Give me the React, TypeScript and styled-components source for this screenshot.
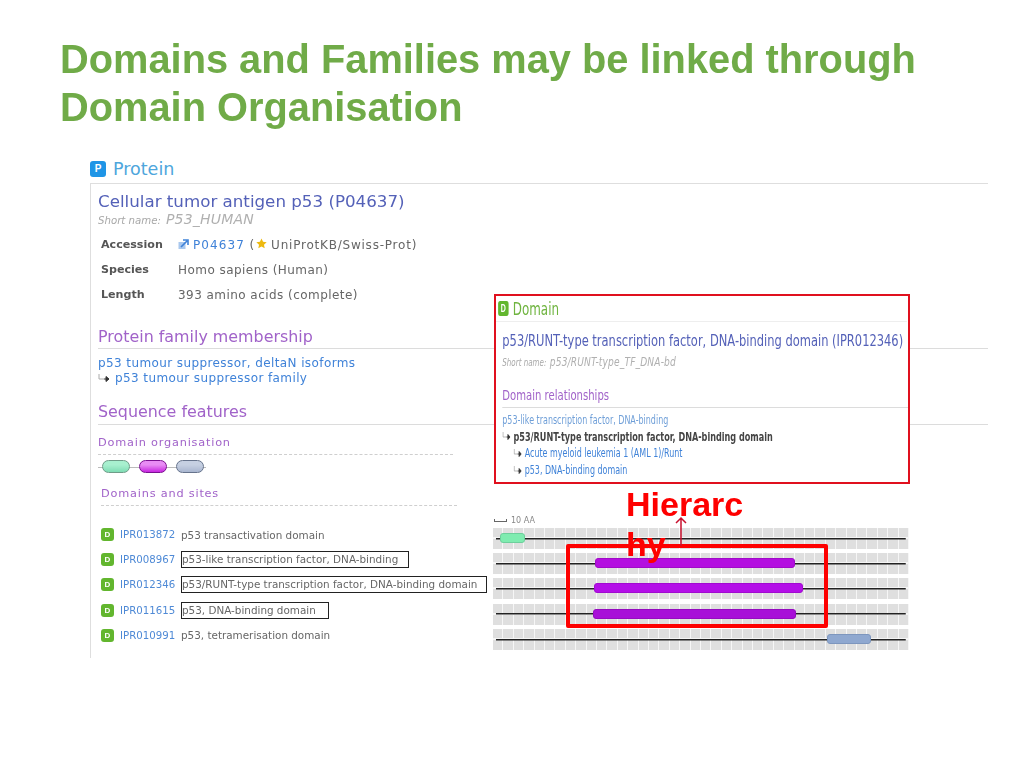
import React from "react";
import styled, { createGlobalStyle } from "styled-components";

const Global = createGlobalStyle`
  html, body { margin: 0; padding: 0; background: #fff; }
  body { width: 1024px; height: 768px; overflow: hidden; font-family: "DejaVu Sans", Verdana, sans-serif; }
`;

const Slide = styled.div`
  width: 1024px;
  height: 768px;
  display: flex;
  flex-direction: column;
  background: #fff;
`;
const Title = styled.h1`
  margin: 36px 0 0 60px;
  font: bold 39.8px/47.5px "Liberation Sans", Arial, sans-serif;
  color: #70ab48;
  height: 92px;
  white-space: nowrap;
  filter: blur(0.25px);
`;
const ProteinHead = styled.div`
  margin: 30px 0 0 90px;
  height: 25px;
  padding-bottom: 4px;
  box-sizing: border-box;
  display: flex;
  align-items: center;
  gap: 7px;
  font-size: 17.5px;
  color: #4ea6dc;
`;
const Badge = styled.span<{ $c: string; $s: number }>`
  width: ${(p) => p.$s}px;
  height: ${(p) => p.$s}px;
  flex: none;
  border-radius: 3px;
  display: inline-flex;
  align-items: center;
  justify-content: center;
  background: ${(p) => p.$c};
  color: #fff;
  font: bold ${(p) => Math.round(p.$s * 0.65)}px "Liberation Sans", sans-serif;
`;
const Panel = styled.div`
  position: relative;
  margin-left: 90px;
  width: 898px;
  height: 475px;
  border-top: 1px solid #dedede;
  border-left: 1px solid #dedede;
  padding: 7px 0 0 7px;
  box-sizing: border-box;
  filter: blur(0.3px);
`;
const Name = styled.div`
  font-size: 16.7px;
  line-height: 20px;
  color: #5461b8;
`;
const Short = styled.div`
  display: flex;
  align-items: baseline;
  gap: 5px;
  margin-top: -1px;
  font-style: italic;
  color: #b0b0b0;
  font-size: 14px;
  line-height: 18px;
  letter-spacing: 0.2px;
  & > small { font-size: 10.2px; color: #a8a8a8; letter-spacing: 0; }
`;
const Info = styled.div`
  display: grid;
  grid-template-columns: 77px auto;
  grid-auto-rows: 25px;
  align-items: center;
  margin: 2px 0 0 3px;
  font-size: 12px;
  color: #666;
  letter-spacing: 0.45px;
`;
const Key = styled.b`
  color: #555;
  font-size: 11.1px;
  letter-spacing: 0;
`;
const Accession = styled.span`
  letter-spacing: 0.78px;
`;
const Link = styled.span`
  color: #3f82d8;
  letter-spacing: 1.1px;
`;
const Head = styled.div<{ $top: number; $pb: number }>`
  margin-top: ${(p) => p.$top}px;
  font-size: 15.9px;
  line-height: 20px;
  padding-bottom: ${(p) => p.$pb}px;
  color: #a163c9;
  border-bottom: 1px solid #dcdcdc;
`;
const Family = styled.div`
  margin-top: 7px;
  font-size: 12px;
  line-height: 15px;
  color: #3f82d8;
  letter-spacing: 0.4px;
`;
const Sub = styled.div<{ $top: number; $left: number; $w: number }>`
  margin: ${(p) => p.$top}px 0 0 ${(p) => p.$left}px;
  width: ${(p) => p.$w}px;
  font-size: 11.3px;
  line-height: 16px;
  padding-bottom: 3px;
  letter-spacing: 0.8px;
  color: #a163c9;
  border-bottom: 1px dashed #cfcfcf;
`;
const Org = styled.div`
  position: relative;
  width: 108px;
  height: 14px;
  margin-top: 5px;
  display: flex;
  gap: 9px;
  padding-left: 4px;
  box-sizing: border-box;
  background: linear-gradient(#bbb, #bbb) center / 100% 1px no-repeat;
`;
const Pill = styled.span<{ $top: string; $mid: string; $edge: string }>`
  width: 28px;
  height: 13px;
  box-sizing: border-box;
  border-radius: 7px;
  border: 1.5px solid ${(p) => p.$edge};
  background: linear-gradient(${(p) => p.$top}, ${(p) => p.$top} 35%, ${(p) => p.$mid});
`;
const Rows = styled.div`
  position: relative;
  margin: 20px 0 0 3px;
  display: grid;
  grid-template-columns: 392px 416px;
  grid-auto-rows: 25.2px;
`;
const Row = styled.div`
  display: flex;
  align-items: center;
  font-size: 10.4px;
  color: #666;
  height: 25px;
  padding-bottom: 8px;
  box-sizing: border-box;
`;
const Ipr = styled.span`
  color: #4f8ad6;
  margin-left: 6px;
  width: 61px;
  font-size: 10.2px;
`;
const Boxed = styled.span<{ $pad: number }>`
  height: 17px;
  line-height: 15px;
  box-sizing: border-box;
  border: 1px solid #222;
  padding: 0 ${(p) => p.$pad}px 0 0;
  white-space: nowrap;
`;
const Track = styled.div`
  position: relative;
  height: 21px;
  align-self: center;
  background:
    linear-gradient(#222, #222) center / 98.5% 1.5px no-repeat,
    repeating-linear-gradient(90deg, transparent 0 9.4px, #f6f6f6 9.4px 10.4px),
    linear-gradient(#dfdfdf 0 9px, #f4f4f4 9px 11px, #dfdfdf 11px);
`;
const Bar = styled.span<{ $l: number; $w: number; $c: string; $b: string }>`
  position: absolute;
  top: 5px;
  left: ${(p) => p.$l}px;
  width: ${(p) => p.$w}px;
  height: 10px;
  box-sizing: border-box;
  border-radius: 3px;
  background: ${(p) => p.$c};
  border: 1px solid ${(p) => p.$b};
`;
const Scale = styled.div`
  position: absolute;
  left: 393px;
  top: -10px;
  display: flex;
  align-items: center;
  gap: 4px;
  font-size: 8px;
  color: #888;
  &::before { content: ""; width: 11px; height: 2px; border: 1px solid #666; border-top: 0; }
`;
const RedFrame = styled.div`
  position: absolute;
  left: 465px;
  top: 18px;
  width: 262px;
  height: 84px;
  box-sizing: border-box;
  border: 4px solid #fe0000;
  border-radius: 2px;
`;
const Arrow = styled.svg`
  position: absolute;
  left: 573px;
  top: -10px;
  width: 14px;
  height: 30px;
`;
const Hier = styled.div`
  position: absolute;
  left: 525px;
  top: -42px;
  width: 125px;
  font: bold 34px/40px "Liberation Sans", Arial, sans-serif;
  color: #fe0000;
  word-break: break-all;
`;
const Popup = styled.div`
  position: absolute;
  left: 403px;
  top: 110px;
  width: 416px;
  height: 190px;
  box-sizing: border-box;
  border: 2px solid #e0101e;
  background: #fff;
  overflow: hidden;
`;
const PopupBody = styled.div`
  width: 587px;
  transform: scaleX(0.7);
  transform-origin: 0 0;
`;
const PopTop = styled.div`
  display: flex;
  align-items: center;
  gap: 6px;
  height: 25px;
  padding-left: 3px;
  border-bottom: 1px solid #eee;
  font-size: 17px;
  color: #6fb43f;
`;
const PopName = styled.div`
  margin: 9px 0 0 9px;
  font-size: 16.4px;
  line-height: 20px;
  color: #5461b8;
  white-space: nowrap;
`;
const PopShort = styled(Short)`
  margin: 2px 0 0 9px;
  font-size: 13px;
`;
const PopHead = styled.div`
  margin: 13px -9px 0 9px;
  font-size: 14.4px;
  line-height: 20px;
  padding-bottom: 2px;
  color: #a163c9;
  border-bottom: 1px solid #dcdcdc;
`;
const PopList = styled.div`
  margin: 4px 0 0 9px;
  line-height: 16.6px;
  color: #3f82d8;
  white-space: nowrap;
`;
const PopItem = styled.div<{ $in?: boolean; $dark?: boolean; $pale?: boolean }>`
  display: flex;
  align-items: center;
  gap: 4px;
  padding-left: ${(p) => (p.$in ? 16 : 0)}px;
  color: ${(p) => (p.$dark ? "#444" : p.$pale ? "#6f9fd8" : "inherit")};
  font-weight: ${(p) => (p.$dark ? "bold" : "normal")};
  font-size: ${(p) => (p.$dark ? 11.6 : 11.4)}px;
`;
const FamilyChild = styled.span`
  display: inline-flex;
  align-items: center;
  gap: 5px;
`;
const SubArrowSvg = styled.svg`
  flex: none;
`;
const ExtSvg = styled.svg`
  margin-right: 4px;
  vertical-align: -1px;
`;
const StarSvg = styled.svg`
  margin: 0 4px 0 1px;
`;

const SubArrow = () => (
  <SubArrowSvg width="12" height="9" viewBox="0 0 12 9">
    <path d="M1 0v5h5" fill="none" stroke="#aaa" strokeWidth="1" />
    <path d="M6 5h3M8 2.5 11 5 8 7.5z" stroke="#333" fill="#333" strokeWidth="1" />
  </SubArrowSvg>
);
const Ext = () => (
  <ExtSvg width="11" height="11" viewBox="0 0 11 11">
    <rect x="0.5" y="3" width="7" height="7" fill="#a9c8ee" />
    <path d="M3 8 9 2M5 1h5v5" stroke="#3f82d8" strokeWidth="1.6" fill="none" />
  </ExtSvg>
);
const Star = () => (
  <StarSvg width="11" height="11" viewBox="0 0 24 24">
    <path d="M12 1l3.4 7.3 7.9.9-5.9 5.4 1.6 7.9L12 18.5l-7 4 1.6-7.9L.7 9.2l7.9-.9z" fill="#edb90f" />
  </StarSvg>
);

const rows = [
  { id: "IPR013872", t: "p53 transactivation domain", bar: { l: 7, w: 25, c: "#7fecb0", b: "#6ecf9c" } },
  { id: "IPR008967", t: "p53-like transcription factor, DNA-binding", pad: 10, bar: { l: 102, w: 200, c: "#b40fe0", b: "#a10bc8" } },
  { id: "IPR012346", t: "p53/RUNT-type transcription factor, DNA-binding domain", pad: 9, bar: { l: 101, w: 209, c: "#b40fe8", b: "#a10bd0" } },
  { id: "IPR011615", t: "p53, DNA-binding domain", pad: 12, bar: { l: 100, w: 203, c: "#a80fd8", b: "#950bc0" } },
  { id: "IPR010991", t: "p53, tetramerisation domain", bar: { l: 334, w: 44, c: "#8fa8d0", b: "#7d96be" } },
];

export default function App() {
  return (
    <Slide>
      <Global />
      <Title>
        Domains and Families may be linked through
        <br />
        Domain Organisation
      </Title>
      <ProteinHead>
        <Badge $c="#1f95e6" $s={16}>P</Badge>
        Protein
      </ProteinHead>
      <Panel>
        <Name>Cellular tumor antigen p53 (P04637)</Name>
        <Short>
          <small>Short name:</small> P53_HUMAN
        </Short>
        <Info>
          <Key>Accession</Key>
          <Accession>
            <Ext />
            <Link>P04637</Link> (<Star />
            UniProtKB/Swiss-Prot)
          </Accession>
          <Key>Species</Key>
          <span>Homo sapiens (Human)</span>
          <Key>Length</Key>
          <span>393 amino acids (complete)</span>
        </Info>
        <Head $top={20} $pb={1}>Protein family membership</Head>
        <Family>
          p53 tumour suppressor, deltaN isoforms
          <br />
          <FamilyChild>
            <SubArrow />
            p53 tumour suppressor family
          </FamilyChild>
        </Family>
        <Head $top={15} $pb={2}>Sequence features</Head>
        <Sub $top={10} $left={0} $w={355}>Domain organisation</Sub>
        <Org>
          <Pill $top="#a8f0cf" $mid="#7fdcb4" $edge="#6f9c88" />
          <Pill $top="#e88cf4" $mid="#c826e0" $edge="#7a1090" />
          <Pill $top="#c6d0e2" $mid="#a9b6d0" $edge="#66738c" />
        </Org>
        <Sub $top={12} $left={3} $w={356}>Domains and sites</Sub>
        <Rows>
          {rows.map((r) => (
            <React.Fragment key={r.id}>
              <Row>
                <Badge $c="#62b62e" $s={13}>D</Badge>
                <Ipr>{r.id}</Ipr>
                {r.pad ? <Boxed $pad={r.pad}>{r.t}</Boxed> : <span>{r.t}</span>}
              </Row>
              <Track>
                <Bar $l={r.bar.l} $w={r.bar.w} $c={r.bar.c} $b={r.bar.b} />
              </Track>
            </React.Fragment>
          ))}
          <Scale>10 AA</Scale>
          <RedFrame />
          <Arrow viewBox="0 0 14 30">
            <path d="M7 30V2M2 7l5-5 5 5" fill="none" stroke="#c8102e" strokeWidth="1.5" />
          </Arrow>
          <Hier>Hierarchy</Hier>
        </Rows>
        <Popup>
          <PopupBody>
            <PopTop>
              <Badge $c="#62b62e" $s={15}>D</Badge>
              Domain
            </PopTop>
            <PopName>p53/RUNT-type transcription factor, DNA-binding domain (IPR012346)</PopName>
            <PopShort>
              <small>Short name:</small> p53/RUNT-type_TF_DNA-bd
            </PopShort>
            <PopHead>Domain relationships</PopHead>
            <PopList>
              <PopItem $pale>p53-like transcription factor, DNA-binding</PopItem>
              <PopItem $dark>
                <SubArrow />
                p53/RUNT-type transcription factor, DNA-binding domain
              </PopItem>
              <PopItem $in>
                <SubArrow />
                Acute myeloid leukemia 1 (AML 1)/Runt
              </PopItem>
              <PopItem $in>
                <SubArrow />
                p53, DNA-binding domain
              </PopItem>
            </PopList>
          </PopupBody>
        </Popup>
      </Panel>
    </Slide>
  );
}
